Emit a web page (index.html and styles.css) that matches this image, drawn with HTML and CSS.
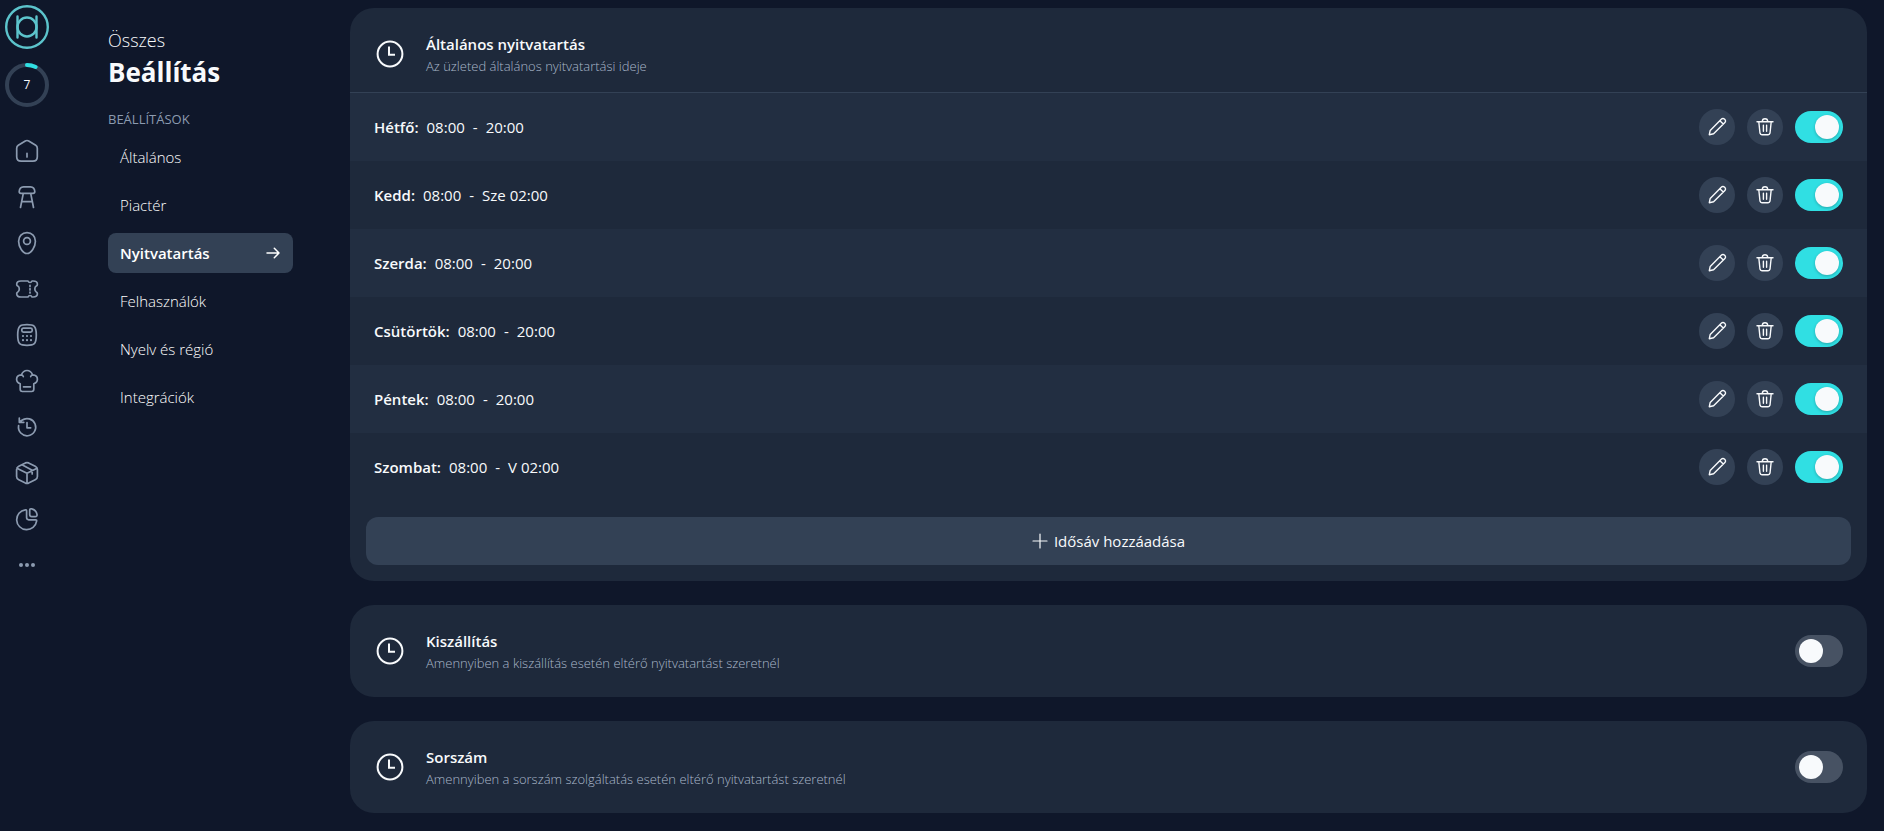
FILE: index.html
```html
<!DOCTYPE html>
<html lang="hu">
<head>
<meta charset="utf-8">
<meta name="viewport" content="width=device-width, initial-scale=1">
<title>Nyitvatartás</title>
<link rel="stylesheet" href="styles.css">
</head>
<body>
<svg class="sprite" aria-hidden="true">
  <symbol id="i-clock" viewBox="0 0 32 32"><circle cx="16" cy="16" r="12.4"/><path stroke-linecap="butt" stroke-linejoin="miter" d="M15 8.500v8.300h6"/></symbol>
  <symbol id="i-pen" viewBox="0 0 20 20"><path d="M2.300 17.700l.9-4.300L14.500 2.100a2 2 0 0 1 2.900 0l.5.5a2 2 0 0 1 0 2.900L6.600 16.800zM12.900 3.700l3.400 3.400"/></symbol>
  <symbol id="i-trash" viewBox="0 0 20 20"><path d="M2 4.700h16M3.800 4.700l1.200 11.500a2 2 0 0 0 2 1.600h6a2 2 0 0 0 2-1.600l1.200-11.500M7.300 4.500a2.700 2.700 0 0 1 5.400 0M8.400 8.300v6M11.600 8.300v6"/></symbol>
</svg>
<div class="app">
  <nav class="rail" aria-label="Főmenü">
    <a class="rail-logo" href="#" aria-label="Kezdőlap"><svg viewBox="0 0 44 44"><circle cx="22" cy="22" r="20.800"/><circle cx="22" cy="22" r="9.500"/><path d="M12.500 11.500v21M31.500 11.500v21"/></svg></a>
    <a class="rail-progress" href="#"><svg viewBox="0 0 44 44" aria-hidden="true"><circle class="track" cx="22" cy="22" r="20"/><path class="value" d="M22 2a20 20 0 0 1 8.600 1.950"/></svg><span>7</span></a>
    <div class="rail-icons">
      <a href="#" aria-label="Áttekintés"><svg viewBox="0 0 24 24"><path d="M1.700 9.200q0-1.900 1.600-2.900l7-4.300q1.700-1 3.400 0l7 4.300q1.600 1 1.600 2.900v8.600q0 4.400-4.400 4.400H6.100q-4.400 0-4.400-4.400zM12 14.300v3.700"/></svg></a>
      <a href="#" aria-label="Asztalok"><svg viewBox="0 0 24 24"><path d="M8.500 1.800h7q4 .2 4.300 4.700 0 1.800-1.800 1.800H6q-1.800 0-1.800-1.800.3-4.500 4.300-4.700zM8.300 8.300L5.500 22.500M15.700 8.300l2.800 14.200M6.700 16.700h10.600"/></svg></a>
      <a href="#" aria-label="Helyszín"><svg viewBox="0 0 24 24"><path d="M12 1.700c-5 0-8.400 3.800-8.400 8.500 0 5.600 4.200 12.300 8.400 12.300s8.400-6.700 8.400-12.300c0-4.700-3.400-8.500-8.400-8.500z"/><circle cx="12" cy="10" r="3.400"/></svg></a>
      <a href="#" aria-label="Kuponok"><svg viewBox="0 0 24 24"><path d="M13 4H6Q1.700 4 1.700 7.200q0 1.400 1.100 1.900 1.500.8 1.500 2.900t-1.500 2.900q-1.100.5-1.100 1.900Q1.700 20 6 20h7q.6-1.500 2-1.500t2 1.500h1.100q4.300 0 4.300-3.200 0-1.400-1.100-1.900-1.500-.8-1.500-2.900t1.500-2.900q1.100-.5 1.100-1.900Q22.400 4 18.100 4H17q-.6 1.500-2 1.500T13 4zM15 8.300v1.200M15 11.700v1.200M15 15v1"/></svg></a>
      <a href="#" aria-label="Pénztár"><svg viewBox="0 0 24 24"><path d="M12 1.600c7 0 9.300 1 9.300 10.400S19 22.400 12 22.400 2.700 21.400 2.700 12 5 1.600 12 1.600z"/><rect x="6.800" y="5.200" width="10.400" height="4" rx="1.600"/><path class="dots" d="M8 13v.01M12 13v.01M16 13v.01M8 17.200v.01M12 17.200v.01M16 17.200v.01"/></svg></a>
      <a href="#" aria-label="Konyha"><svg viewBox="0 0 24 24"><path d="M5.200 14.700Q1.600 13.400 1.600 10.200q0-4.200 4.800-4.400Q8.200 1.500 12 1.500t5.600 4.300q4.800.2 4.800 4.400 0 3.200-3.600 4.500v5.600q0 2.200-2.200 2.200H7.400q-2.200 0-2.200-2.200zM6.400 5.800q1.400.1 1.900 1.800M17.600 5.800q-1.400.1-1.900 1.800M8.500 17.800h7"/></svg></a>
      <a href="#" aria-label="Előzmények"><svg viewBox="0 0 24 24"><path d="M3.600 10.700A8.600 8.600 0 1 0 6.900 5.300L4.300 7.200M4.300 3v4.300h4.500M12 7.500v5.300h3.700"/></svg></a>
      <a href="#" aria-label="Termékek"><svg viewBox="0 0 24 24"><path d="M12 12.300v10.200M1.900 7.200L12 12.300l10.100-5.100M10.400 1.900q1.600-.7 3.200 0l6.600 3.300q2.200 1.100 2.200 3.400v6.800q0 2.300-2.200 3.400l-6.600 3.300q-1.600.7-3.200 0l-6.600-3.300q-2.200-1.100-2.200-3.400V8.600q0-2.300 2.200-3.400zM7 3.800l10.200 5.400v3.700"/></svg></a>
      <a href="#" aria-label="Kimutatások"><svg viewBox="0 0 24 24"><path d="M10.300 2.800q1.300-.3 1.300 1.100v6.700q0 2.200 2.200 2.200h6.800q1.300 0 1 1.300A10 10 0 1 1 10.300 2.800zM14.700 3.400q0-2 2-1.600a7 7 0 0 1 5.300 5.600q.4 2.200-1.800 2.200h-3.400q-2.100 0-2.100-2.100z"/></svg></a>
      <a href="#" aria-label="Továbbiak"><svg viewBox="0 0 24 24"><g class="filled"><circle cx="6" cy="12" r="2"/><circle cx="12" cy="12" r="2"/><circle cx="18" cy="12" r="2"/></g></svg></a>
    </div>
  </nav>

  <aside class="menu">
    <p class="menu-over">Összes</p>
    <h1 class="menu-title">Beállítás</h1>
    <h2 class="menu-label">BEÁLLÍTÁSOK</h2>
    <nav class="menu-list" aria-label="Beállítások">
      <a href="#">Általános</a>
      <a href="#">Piactér</a>
      <a href="#" class="active" aria-current="page">Nyitvatartás<svg viewBox="0 0 16 16" aria-hidden="true"><path d="M2 8h12M9.300 3.300L14 8l-4.700 4.700"/></svg></a>
      <a href="#">Felhasználók</a>
      <a href="#">Nyelv és régió</a>
      <a href="#">Integrációk</a>
    </nav>
  </aside>

  <main class="content">
    <section class="card">
      <header class="card-head">
        <svg class="clock" aria-hidden="true"><use href="#i-clock"/></svg>
        <div class="card-text"><h3>Általános nyitvatartás</h3><p>Az üzleted általános nyitvatartási ideje</p></div>
      </header>
      <ul class="days">
        <li><b>Hétfő:</b><span class="hours"><span>08:00</span><span>-</span><span>20:00</span></span><button class="round" aria-label="Szerkesztés"><svg><use href="#i-pen"/></svg></button><button class="round" aria-label="Törlés"><svg><use href="#i-trash"/></svg></button><input class="switch" type="checkbox" checked aria-label="Hétfő"></li>
        <li><b>Kedd:</b><span class="hours"><span>08:00</span><span>-</span><span>Sze 02:00</span></span><button class="round" aria-label="Szerkesztés"><svg><use href="#i-pen"/></svg></button><button class="round" aria-label="Törlés"><svg><use href="#i-trash"/></svg></button><input class="switch" type="checkbox" checked aria-label="Kedd"></li>
        <li><b>Szerda:</b><span class="hours"><span>08:00</span><span>-</span><span>20:00</span></span><button class="round" aria-label="Szerkesztés"><svg><use href="#i-pen"/></svg></button><button class="round" aria-label="Törlés"><svg><use href="#i-trash"/></svg></button><input class="switch" type="checkbox" checked aria-label="Szerda"></li>
        <li><b>Csütörtök:</b><span class="hours"><span>08:00</span><span>-</span><span>20:00</span></span><button class="round" aria-label="Szerkesztés"><svg><use href="#i-pen"/></svg></button><button class="round" aria-label="Törlés"><svg><use href="#i-trash"/></svg></button><input class="switch" type="checkbox" checked aria-label="Csütörtök"></li>
        <li><b>Péntek:</b><span class="hours"><span>08:00</span><span>-</span><span>20:00</span></span><button class="round" aria-label="Szerkesztés"><svg><use href="#i-pen"/></svg></button><button class="round" aria-label="Törlés"><svg><use href="#i-trash"/></svg></button><input class="switch" type="checkbox" checked aria-label="Péntek"></li>
        <li><b>Szombat:</b><span class="hours"><span>08:00</span><span>-</span><span>V 02:00</span></span><button class="round" aria-label="Szerkesztés"><svg><use href="#i-pen"/></svg></button><button class="round" aria-label="Törlés"><svg><use href="#i-trash"/></svg></button><input class="switch" type="checkbox" checked aria-label="Szombat"></li>
      </ul>
      <button class="add"><svg viewBox="0 0 16 16" aria-hidden="true"><path d="M8 1v14M1 8h14"/></svg>Idősáv hozzáadása</button>
    </section>

    <section class="card card-row">
      <svg class="clock" aria-hidden="true"><use href="#i-clock"/></svg>
      <label class="card-text" for="delivery"><strong>Kiszállítás</strong><span>Amennyiben a kiszállítás esetén eltérő nyitvatartást szeretnél</span></label>
      <input class="switch" type="checkbox" id="delivery">
    </section>

    <section class="card card-row">
      <svg class="clock" aria-hidden="true"><use href="#i-clock"/></svg>
      <label class="card-text" for="queue"><strong>Sorszám</strong><span>Amennyiben a sorszám szolgáltatás esetén eltérő nyitvatartást szeretnél</span></label>
      <input class="switch" type="checkbox" id="queue">
    </section>
  </main>
</div>
</body>
</html>
```
FILE: styles.css
```css
* { box-sizing: border-box; margin: 0; padding: 0; }

body {
  background: #0f172a;
  color: #f8fafc;
  font-family: "Open Sans", "Noto Sans", sans-serif;
  font-size: 15px;
  font-weight: 300;
  line-height: 24px;
}

a { color: inherit; text-decoration: none; }
button { border: 0; color: inherit; font: inherit; cursor: pointer; }
svg { display: block; fill: none; stroke: currentColor; stroke-linecap: round; stroke-linejoin: round; }
.sprite { display: none; }

.app { display: grid; grid-template-columns: 54px 296px 1fr; min-height: 100vh; }

/* Icon rail */
.rail { display: flex; flex-direction: column; align-items: center; padding-top: 5px; }
.rail-logo { color: #5cc4cc; }
.rail-logo svg { width: 44px; height: 44px; stroke-width: 2.4; }
.rail-progress { display: grid; place-items: center; margin-top: 14px; font-size: 12px; font-weight: 400; }
.rail-progress > * { grid-area: 1 / 1; }
.rail-progress svg { width: 44px; height: 44px; stroke-width: 4; }
.track { stroke: #334155; }
.value { stroke: #30dfe3; }
.rail-icons { display: flex; flex-direction: column; gap: 22px; margin-top: 32px; color: #8c9bb0; }
.rail-icons svg { width: 24px; height: 24px; stroke-width: 1.7; }
.rail-icons .dots { stroke-width: 2.2; }
.filled { fill: currentColor; stroke: none; }

/* Settings menu */
.menu { padding: 28px 57px 0 54px; }
.menu-over { font-size: 18px; }
.menu-title { font-size: 26px; font-weight: 700; line-height: 40px; }
.menu-label { margin-top: 16px; color: #8c9bb0; font-size: 13px; font-weight: 400; line-height: 22px; }
.menu-list { display: flex; flex-direction: column; gap: 8px; margin-top: 7px; }
.menu-list a { display: flex; align-items: center; justify-content: space-between; height: 40px; padding: 0 12px; border-radius: 8px; color: #fff; }
.menu-list .active { background: #334155; font-weight: 600; }
.menu-list svg { width: 16px; height: 16px; stroke-width: 1.5; }

/* Opening hours */
.content { display: flex; flex-direction: column; gap: 24px; padding: 8px 17px 18px 0; }
.card { overflow: hidden; border-radius: 24px; background: #1e293b; }
.card-head, .card-row { display: flex; align-items: center; gap: 20px; padding: 24px; }
.card-head { padding-bottom: 16px; border-bottom: 1px solid #334155; }
.clock { flex: none; width: 32px; height: 32px; stroke-width: 2; }
.card-text { flex: 1; }
.card-text h3, .card-text strong { display: block; font-size: 15px; font-weight: 600; line-height: 24px; }
.card-text p, .card-text span { display: block; color: #a9b7ca; font-size: 13px; line-height: 20px; }

.days { list-style: none; }
.days li { display: flex; align-items: center; gap: 12px; height: 68px; padding: 0 24px; }
.days li:nth-child(odd) { background: #222e41; }
.days b { margin-right: -4px; font-weight: 600; }
.hours { display: flex; flex: 1; gap: 8px; font-weight: 400; }

.round { display: grid; place-items: center; width: 36px; height: 36px; border-radius: 50%; background: #334155; }
.round svg { width: 20px; height: 20px; stroke-width: 1.4; }

.switch { flex: none; appearance: none; width: 48px; height: 32px; padding: 4px; border-radius: 16px; background: #475263; cursor: pointer; }
.switch::before { content: ""; display: block; width: 24px; height: 24px; border-radius: 50%; background: #f8fafc; }
.switch:checked { background: #30dfe3; }
.switch:checked::before { margin-left: 16px; box-shadow: 0 1px 3px rgb(0 0 0 / 25%); }

.add { display: flex; align-items: center; justify-content: center; gap: 6px; width: calc(100% - 32px); height: 48px; margin: 16px; border-radius: 12px; background: #334155; font-weight: 400; }
.add svg { width: 16px; height: 16px; stroke-width: 1.2; }
```
